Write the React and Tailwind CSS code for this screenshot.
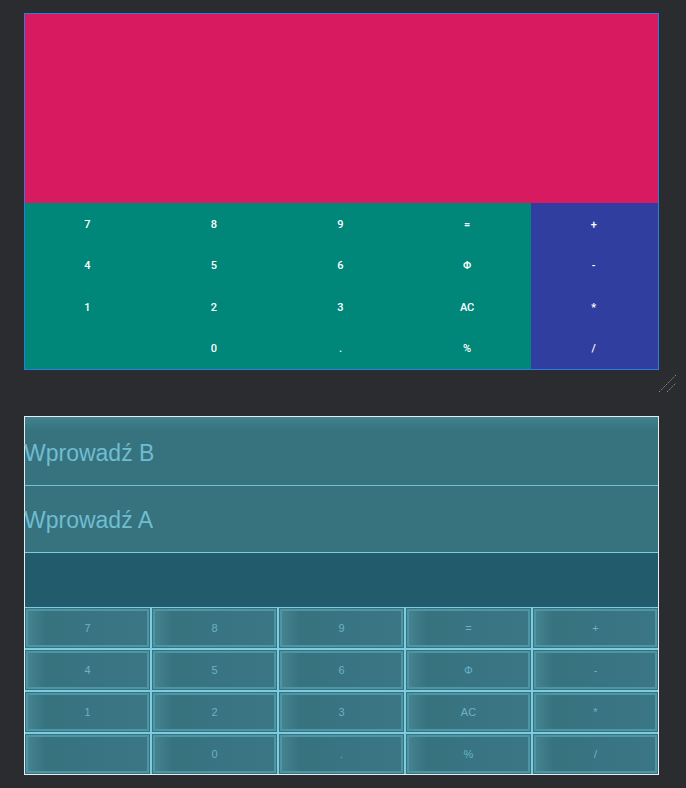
const keys = [
  ["7", "8", "9", "=", "+"],
  ["4", "5", "6", "Φ", "-"],
  ["1", "2", "3", "AC", "*"],
  ["", "0", ".", "%", "/"],
];

function DesignView() {
  return (
    <div className="ml-[24px] w-[635px] border border-[#2a7de1] bg-[#d81b60]">
      <div className="h-[189px] bg-[#d81b60]" />
      <div className="grid h-[166px] grid-cols-5 grid-rows-4">
        {keys.flat().map((k, i) => (
          <div
            key={i}
            className={
              "flex items-center justify-center pt-[2px] pr-[2px] text-[11px] font-medium text-white " +
              (i % 5 === 4 ? "bg-[#303f9f]" : "bg-[#00877a]")
            }
            style={{ fontFamily: "Roboto, sans-serif" }}
          >
            {k}
          </div>
        ))}
      </div>
    </div>
  );
}

function BlueprintView() {
  return (
    <div
      className="ml-[24px] w-[635px] border border-[#e8eef0] bg-[#37727f]"
      style={{ fontFamily: "'Liberation Sans', Arial, sans-serif" }}
    >
      <div className="flex h-[69px] items-center border-b border-[#72c3d8] bg-gradient-to-b from-[#40838f] via-[#37727f] via-[20%] to-[#37727f] pt-[5px] text-[23px] text-[#6fbdd1]">
        <span className="-ml-[1px]">Wprowadź B</span>
      </div>
      <div className="flex h-[67px] items-center border-b border-[#7ccde2] pt-[3px] text-[23px] text-[#6fbdd1]">
        <span className="-ml-[1px]">Wprowadź A</span>
      </div>
      <div className="h-[55px] border-b border-[#7ccde2] bg-[#225b6c]" />
      <div className="grid h-[166px] grid-cols-5 grid-rows-4 gap-[2px] bg-[#7ccde2]">
        {keys.flat().map((k, i) => (
          <div key={i} className="flex bg-[#37727f] p-[1px]">
            <div className="flex flex-1 items-center justify-center border-2 border-[#4e95a6] bg-gradient-to-r from-[#44838f] via-[#37727f] via-[15%] to-[#3a7684] text-[11px] text-[#6ab3c7]">
              {k}
            </div>
          </div>
        ))}
      </div>
    </div>
  );
}

export default function App() {
  return (
    <div className="relative h-[788px] w-[686px] overflow-hidden bg-[#2b2c2f] pt-[13px]">
      <DesignView />
      <div className="flex h-[46px] justify-end pr-[8px] pt-[3px]">
        <svg width="20" height="20" viewBox="0 0 20 20">
          <line x1="1" y1="19" x2="18" y2="2" stroke="#8a8c90" strokeWidth="1" strokeDasharray="1.5 1" />
          <line x1="9" y1="19" x2="18" y2="10" stroke="#8a8c90" strokeWidth="1" strokeDasharray="1.5 1" />
        </svg>
      </div>
      <BlueprintView />
    </div>
  );
}
